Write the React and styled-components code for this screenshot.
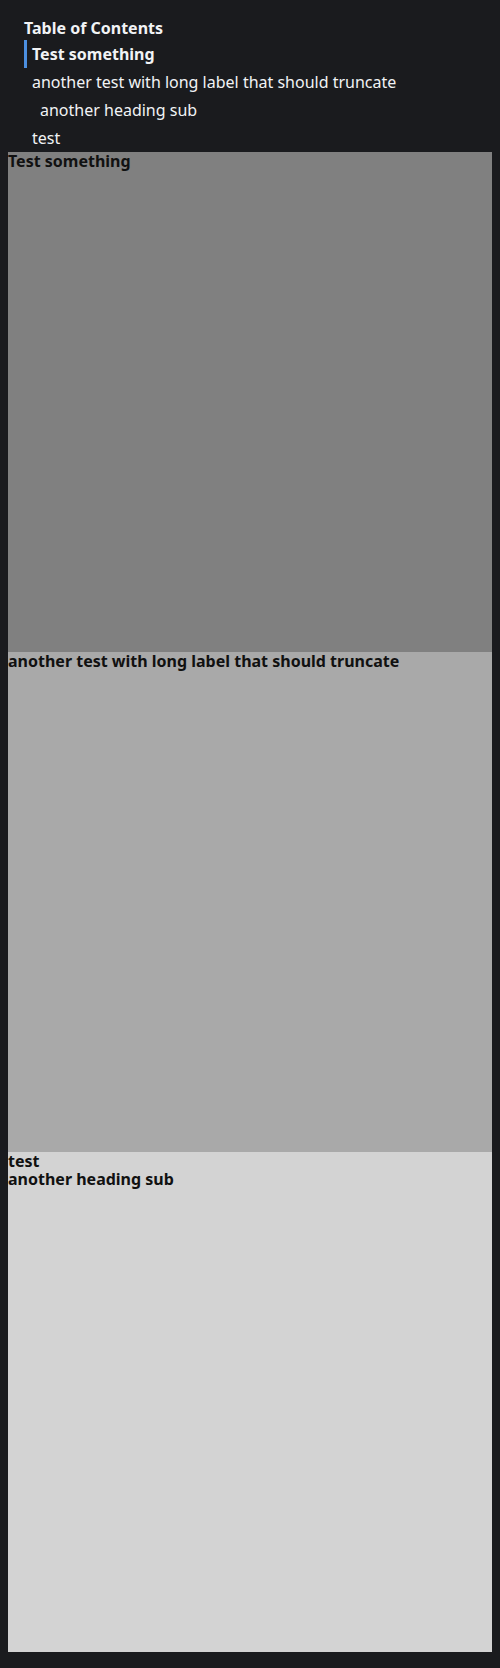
import React from 'react'
import styled, {createGlobalStyle} from 'styled-components'

const GlobalStyle = createGlobalStyle`
  body {
    margin: 8px;
    background: #1a1b1e;
    font-family: "Noto Sans", "Open Sans", sans-serif;
  }
`

const Page = styled.div`
  padding-bottom: 8px;
`

const Toc = styled.nav`
  padding: 8px 16px 0;
  color: #f1f3f5;
`

const TocTitle = styled.div`
  font-weight: 700;
  font-size: 16px;
  line-height: 24px;
`

const TocItem = styled.a`
  display: block;
  height: 28px;
  line-height: 28px;
  font-size: 16px;
  color: #f1f3f5;
  text-decoration: none;
  border-left: 3px solid ${p => (p.$active ? '#4c8fe0' : 'transparent')};
  padding-left: ${p => 5 + (p.$level - 2) * 8}px;
  font-weight: ${p => (p.$active ? 700 : 400)};
  white-space: nowrap;
  overflow: hidden;
  text-overflow: ellipsis;
`

const Section = styled.section`
  height: 500px;
  background: ${p => p.$bg};
`

const Heading = styled.h2`
  margin: 0;
  font-size: 16px;
  line-height: 18px;
  font-weight: 700;
  color: #111;
`

const headings = [
  {id: 'test-something', label: 'Test something', level: 2},
  {id: 'another-test', label: 'another test with long label that should truncate', level: 2},
  {id: 'another-heading-sub', label: 'another heading sub', level: 3},
  {id: 'test', label: 'test', level: 2},
]

export default function App() {
  return (
    <Page>
      <GlobalStyle />
      <Toc>
        <TocTitle>Table of Contents</TocTitle>
        {headings.map((h, i) => (
          <TocItem key={h.id} href={`#${h.id}`} $level={h.level} $active={i === 0}>
            {h.label}
          </TocItem>
        ))}
      </Toc>
      <Section $bg="#808080">
        <Heading id="test-something">Test something</Heading>
      </Section>
      <Section $bg="#a9a9a9">
        <Heading id="another-test">another test with long label that should truncate</Heading>
      </Section>
      <Section $bg="#d3d3d3">
        <Heading id="test">test</Heading>
        <Heading as="h3" id="another-heading-sub">another heading sub</Heading>
      </Section>
    </Page>
  )
}
